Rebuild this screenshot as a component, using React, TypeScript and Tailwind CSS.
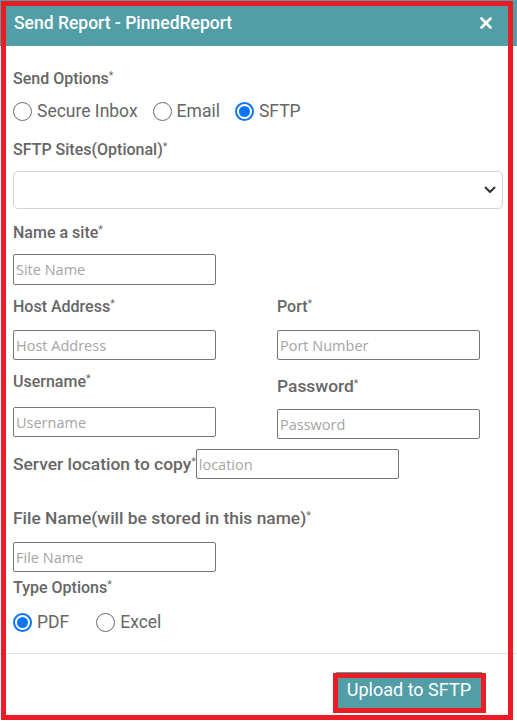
import React from "react";

function Radio({ checked, label }: { checked?: boolean; label: string }) {
  return (
    <div className="flex items-center h-[20px]">
      {checked ? (
        <span className="w-[19px] h-[19px] rounded-full border-2 border-[#0b75f5] flex items-center justify-center">
          <span className="w-[11px] h-[11px] rounded-full bg-[#0b75f5]" />
        </span>
      ) : (
        <span className="w-[19px] h-[19px] rounded-full border border-[#6b6b6b]" />
      )}
      <span className="ml-[5px] text-[17.5px] leading-[20px] text-[#666]">{label}</span>
    </div>
  );
}

function Label({ text, big }: { text: string; big?: boolean }) {
  return (
    <div
      className={
        big
          ? "text-[17.4px] leading-[21px] font-medium text-[#666] whitespace-nowrap"
          : "text-[16px] leading-[19px] font-medium text-[#666] whitespace-nowrap"
      }
    >
      {text}
      <sup className="text-[10.5px] font-normal">*</sup>
    </div>
  );
}

function Input({ placeholder }: { placeholder: string }) {
  return (
    <input
      placeholder={placeholder}
      className="w-[203px] h-[30px] border border-[#767676] rounded-[2px] px-[2px] text-[14.5px] font-['Open_Sans',sans-serif] text-[#333] placeholder:text-[#a5a5a5] outline-none"
    />
  );
}

export default function App() {
  return (
    <div className="relative w-[517px] h-[721px] bg-white font-['Roboto',sans-serif] overflow-hidden">
      <div className="h-[46px] bg-[#529ea7] flex items-center justify-between pl-[14px] pr-[25px]">
        <span className="text-white text-[17.5px] font-medium">Send Report - PinnedReport</span>
        <svg width="12" height="12" viewBox="0 0 12 12">
          <path d="M1.5 1.5 L10.5 10.5 M10.5 1.5 L1.5 10.5" stroke="white" strokeWidth="2.6" strokeLinecap="round" />
        </svg>
      </div>

      <div className="px-[13px] flex flex-col">
        <div className="mt-[23px]">
          <Label text="Send Options" />
        </div>
        <div className="mt-[13px] flex items-center gap-[15px]">
          <Radio label="Secure Inbox" />
          <Radio label="Email" />
          <Radio label="SFTP" checked />
        </div>
        <div className="mt-[19px]">
          <Label text="SFTP Sites(Optional)" />
        </div>
        <div className="mt-[12px] h-[38px] w-[490px] border border-[#ced4da] rounded-[5px] flex items-center justify-end pr-[6px]">
          <svg width="12" height="8" viewBox="0 0 12 8">
            <path d="M1.5 1.5 L6 6 L10.5 1.5" stroke="#333" strokeWidth="2" fill="none" strokeLinecap="round" strokeLinejoin="round" />
          </svg>
        </div>
        <div className="mt-[14px]">
          <Label text="Name a site" />
        </div>
        <div className="mt-[12px] h-[31px] flex">
          <input
            placeholder="Site Name"
            className="w-[203px] h-[31px] border border-[#767676] rounded-[2px] px-[2px] text-[14.5px] font-['Open_Sans',sans-serif] text-[#333] placeholder:text-[#a5a5a5] outline-none"
          />
        </div>

        <div className="mt-[12px] grid grid-cols-[264px_1fr]">
          <div className="flex flex-col">
            <Label text="Host Address" />
            <div className="mt-[14px]">
              <Input placeholder="Host Address" />
            </div>
          </div>
          <div className="flex flex-col">
            <Label text="Port" />
            <div className="mt-[14px]">
              <Input placeholder="Port Number" />
            </div>
          </div>
        </div>

        <div className="mt-[12px] grid grid-cols-[264px_1fr]">
          <div className="flex flex-col">
            <Label text="Username" />
            <div className="mt-[16px]">
              <Input placeholder="Username" />
            </div>
          </div>
          <div className="flex flex-col pt-[4px]">
            <Label text="Password" big />
            <div className="mt-[12px]">
              <Input placeholder="Password" />
            </div>
          </div>
        </div>

        <div className="mt-[10px] flex items-start">
          <div className="mt-[5px]">
            <Label text="Server location to copy" big />
          </div>
          <Input placeholder="location" />
        </div>

        <div className="mt-[29px]">
          <Label text="File Name(will be stored in this name)" big />
        </div>
        <div className="mt-[13px]">
          <Input placeholder="File Name" />
        </div>
        <div className="mt-[6px]">
          <Label text="Type Options" />
        </div>
        <div className="mt-[15px] flex items-center gap-[27px]">
          <Radio label="PDF" checked />
          <Radio label="Excel" />
        </div>
      </div>

      <div className="mt-[21px] border-t border-[#dee2e6]" />

      <div className="mt-[18px] flex justify-end pr-[35px]">
        <button className="h-[36px] px-[11px] bg-[#529ea7] text-white text-[18px] leading-[36px]">
          Upload to SFTP
        </button>
      </div>

      <div className="absolute left-[1px] top-[1px] w-[512px] h-[719px] border-[5px] border-[#ed1c24] pointer-events-none" />
      <div className="absolute left-[333px] top-[673px] w-[153px] h-[40px] border-[5px] border-[#ed1c24] pointer-events-none" />
    </div>
  );
}
